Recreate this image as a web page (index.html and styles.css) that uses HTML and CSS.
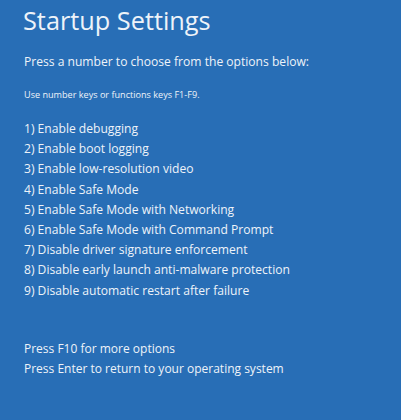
FILE: index.html
```html
<!DOCTYPE html>
<html lang="en">
<head>
    <meta charset="UTF-8">
    <title>Startup Settings</title>
    <link rel="stylesheet" href="styles.css">
</head>
<body>
<div class="screen">
    <h1 class="title">Startup Settings</h1>
    <p class="lead">Press a number to choose from the options below:</p>
    <p class="hint">Use number keys or functions keys F1-F9.</p>
    <ul class="options">
        <li>1) Enable debugging</li>
        <li>2) Enable boot logging</li>
        <li>3) Enable low-resolution video</li>
        <li>4) Enable Safe Mode</li>
        <li>5) Enable Safe Mode with Networking</li>
        <li>6) Enable Safe Mode with Command Prompt</li>
        <li>7) Disable driver signature enforcement</li>
        <li>8) Disable early launch anti-malware protection</li>
        <li>9) Disable automatic restart after failure</li>
    </ul>
    <div class="footer">
        <p>Press F10 for more options</p>
        <p>Press Enter to return to your operating system</p>
    </div>
</div>
</body>
</html>
```

FILE: styles.css
```css
* {
    margin: 0;
    padding: 0
}

ul {
    list-style: none
}

body {
    background-color: #286eb6;
    font-family: "Open Sans", "Noto Sans", sans-serif;
    color: #eef3f9;
}

.screen {
    width: 401px;
    height: 420px;
    padding: 0 0 0 24px;
    box-sizing: border-box;
}

.title {
    font-size: 25.3px;
    font-weight: 400;
    line-height: 30px;
    padding-top: 5px;
    margin-left: -1px;
}

.lead {
    font-size: 12.1px;
    line-height: 18px;
    margin-top: 18px;
}

.hint {
    font-size: 9.1px;
    line-height: 12px;
    margin-top: 18px;
}

.options {
    margin-top: 18px;
    font-size: 12.1px;
    line-height: 20.2px;
}

.footer {
    margin-top: 38px;
    font-size: 12px;
    line-height: 20px;
}
```
